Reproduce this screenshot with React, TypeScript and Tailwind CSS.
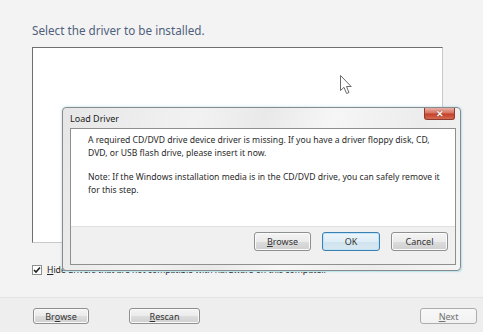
import React from "react";

const font = { fontFamily: '"Noto Sans", "Open Sans", "Liberation Sans", sans-serif' };

function WinButton({
  children,
  className = "",
  variant = "normal",
}: {
  children: React.ReactNode;
  className?: string;
  variant?: "normal" | "focus" | "disabled";
}) {
  const base =
    "flex items-center justify-center rounded-[3px] border text-[9px] leading-none";
  const styles =
    variant === "focus"
      ? "border-[#3c7fb1] bg-[linear-gradient(#eef6fb_0%,#dfedf6_50%,#cfe3ef_51%,#d9e8f1_100%)] text-[#333] shadow-[inset_0_0_0_1px_#bfe3f7]"
      : variant === "disabled"
      ? "border-[#a9adb0] bg-[linear-gradient(#f8f8f8_0%,#f1f1f1_100%)] text-[#707070]"
      : "border-[#8e8f8f] bg-[linear-gradient(#f4f4f4_0%,#ebebeb_50%,#dddddd_51%,#cfcfcf_100%)] text-[#333] shadow-[inset_0_0_0_1px_#fbfbfb]";
  return <div className={`${base} ${styles} ${className}`}>{children}</div>;
}

export default function App() {
  return (
    <div
      className="relative flex h-[332px] w-[483px] flex-col overflow-hidden bg-[#f3f3f3]"
      style={font}
    >
      {/* upper area */}
      <div className="flex h-[297px] flex-col pl-[32px] pt-[21px]">
        <div className="text-[11.7px] leading-[18px] text-[#4f5f7c]">
          Select the driver to be installed.
        </div>
        <div className="mt-[8px] h-[196px] w-[411px] border border-t-[#6f6f6f] border-l-[#6f6f6f] border-r-[#c9c9c9] border-b-[#c9c9c9] bg-white" />
        <div className="mt-[22px] flex items-center">
          <div className="flex h-[10px] w-[10px] items-center justify-center border border-[#8e8f8f] bg-white">
            <svg width="8" height="8" viewBox="0 0 8 8">
              <path d="M1 4 L3 6 L7 1.5" fill="none" stroke="#222" strokeWidth="1.6" />
            </svg>
          </div>
          <div className="ml-[5px] text-[8.6px] leading-none text-[#222]">
            <span className="underline">H</span>ide drivers that are not compatible with hardware on this computer.
          </div>
        </div>
      </div>

      {/* bottom strip */}
      <div className="flex flex-1 items-start border-t border-[#e2e2e2] bg-[#eeeeee] pt-[10px]">
        <WinButton className="ml-[33px] h-[16px] w-[56px]">
          Br<span className="underline">o</span>wse
        </WinButton>
        <WinButton className="ml-[40px] h-[16px] w-[71px]">
          <span className="underline">R</span>escan
        </WinButton>
        <WinButton variant="disabled" className="ml-auto mr-[6px] h-[16px] w-[57px]">
          <span className="underline">N</span>ext
        </WinButton>
      </div>

      {/* mouse cursor */}
      <svg
        className="absolute left-[340px] top-[75px]"
        width="13"
        height="20"
        viewBox="0 0 13 20"
      >
        <path
          d="M0.5 0.5 L0.5 15.5 L4 12.3 L6.6 18.5 L9 17.5 L6.5 11.5 L11.2 11.5 Z"
          fill="white"
          stroke="#6a6a6a"
          strokeWidth="1"
        />
      </svg>

      {/* Load Driver dialog */}
      <div className="absolute left-[62px] top-[107px] flex h-[164px] w-[399px] flex-col rounded-[4px] border border-[#8a8a8a] bg-[linear-gradient(110deg,#e6e6e6_0%,#f2f2f2_30%,#e9e9e9_45%,#f6f6f6_60%,#ececec_80%,#f4f4f4_100%)] pb-[5px] pl-[7px] pr-[4px] shadow-[1px_1px_0_0_#bfe6ee,0_0_3px_rgba(120,200,220,0.6)]">
        <div className="relative flex h-[20px] items-center">
          <div className="mt-[1px] text-[9px] leading-none text-[#1b1b1b]">Load Driver</div>
          <div className="absolute right-[1px] top-0 flex h-[12px] w-[31px] items-center justify-center rounded-b-[3px] border border-t-0 border-[#8d3b2e] bg-[linear-gradient(#eab1a7_0%,#d8735f_45%,#c4412b_55%,#d56b50_100%)]">
            <span className="text-[9px] font-bold leading-none text-white [text-shadow:0_0_1px_#5a1a10]">
              ✕
            </span>
          </div>
        </div>
        <div className="flex flex-1 flex-col border border-[#8f8f8f] bg-white">
          <div className="flex-1 pl-[17px] pr-[6px] pt-[5px] text-[8.6px] leading-[12.5px] text-[#2a2a2a]">
            <div>A required CD/DVD drive device driver is missing. If you have a driver floppy disk, CD,</div>
            <div>DVD, or USB flash drive, please insert it now.</div>
            <div className="mt-[12px]">
              Note: If the Windows installation media is in the CD/DVD drive, you can safely remove it
            </div>
            <div>for this step.</div>
          </div>
          <div className="flex h-[38px] items-start justify-end gap-[11px] border-t border-[#e0e0e0] bg-[#f0f0f0] pr-[7px] pt-[5px]">
            <WinButton className="h-[19px] w-[57px]">
              <span className="underline">B</span>rowse
            </WinButton>
            <WinButton variant="focus" className="h-[19px] w-[58px]">
              OK
            </WinButton>
            <WinButton className="h-[19px] w-[57px]">Cancel</WinButton>
          </div>
        </div>
      </div>
    </div>
  );
}
